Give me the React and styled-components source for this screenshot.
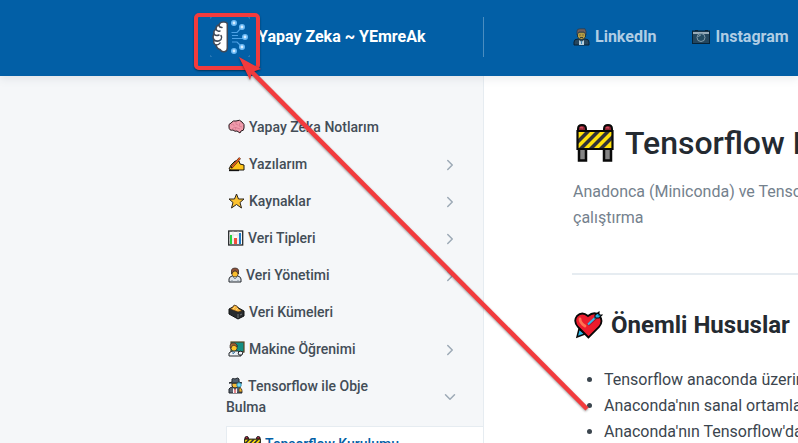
import React from "react";
import styled, { createGlobalStyle } from "styled-components";
import { FiChevronDown, FiChevronRight } from "react-icons/fi";

const GlobalStyle = createGlobalStyle`
  * {
    box-sizing: border-box;
  }
  body {
    margin: 0;
    background-color: #ffffff;
    color: #3b454e;
    font-family: Roboto, sans-serif;
    font-size: 16px;
  }
  a {
    color: inherit;
    text-decoration: none;
  }
  svg {
    flex: none;
  }
`;

const Page = styled.div`
  position: relative;
  display: flex;
  flex-direction: column;
  height: 100vh;
  overflow: hidden;
`;

const Header = styled.header`
  position: relative;
  display: flex;
  align-items: center;
  flex: none;
  height: 76px;
  padding-bottom: 2px;
  background-color: #025fa6;
  box-shadow: 0 3px 8px rgba(116, 129, 141, 0.15);
`;

const Brand = styled.a`
  display: flex;
  align-items: center;
  flex: 0 0 484px;
  gap: 8px;
  height: 40px;
  padding-left: 210px;
  border-right: 1px solid #4a8dc0;
  color: #ffffff;
  font-weight: 700;
  line-height: 24px;
`;

const HeaderNav = styled.nav`
  display: flex;
  gap: 34px;
  padding-left: 89px;
`;

const HeaderLink = styled.a`
  display: flex;
  align-items: center;
  gap: 5px;
  color: #b0cde4;
  font-weight: 700;
  line-height: 24px;
  white-space: nowrap;
`;

const Body = styled.div`
  display: flex;
  flex: 1;
`;

const Sidebar = styled.aside`
  flex: 0 0 484px;
  padding: 33px 0 0 226px;
  background-color: #f5f7f9;
  border-right: 1px solid #e6ecf1;
`;

const Row = styled.a`
  display: flex;
  align-items: center;
  justify-content: space-between;
  padding: 8px 24px 8px 0;
  color: #434d57;
  font-size: 14px;
  font-weight: 500;
  line-height: 21px;
`;

const RowLabel = styled.span`
  max-width: 168px;

  svg {
    margin: 0 4px 0 2px;
    vertical-align: -3px;
  }
`;

const Arrow = styled.span`
  display: flex;
  color: #9daab6;
`;

const SubPages = styled.div`
  border: 1px solid #e6ecf1;
  border-right: none;
  background-color: #ffffff;
`;

const SubLink = styled.a`
  display: flex;
  align-items: center;
  gap: 4px;
  padding: 7px 17px;
  color: #025fa6;
  font-size: 14px;
  font-weight: 500;
  line-height: 21px;
`;

const Main = styled.main`
  flex: 1;
  min-width: 0;
  padding: 46px 0 0 88px;
  white-space: nowrap;
`;

const Title = styled.h1`
  display: flex;
  align-items: center;
  gap: 11px;
  margin: 0;
  padding-left: 4px;
  color: #242a31;
  font-size: 32px;
  font-weight: 500;
  line-height: 42px;
`;

const Lead = styled.p`
  margin: 15px 0 0;
  padding: 0 0 42px 1px;
  border-bottom: 2px solid #e6ecf1;
  color: #74818d;
  line-height: 26px;
`;

const SubTitle = styled.h2`
  display: flex;
  align-items: center;
  gap: 8px;
  margin: 32px 0 0;
  padding-left: 2px;
  color: #242a31;
  font-size: 24px;
  font-weight: 700;
  line-height: 36px;
`;

const Notes = styled.ul`
  margin: 24px 0 0;
  padding-left: 32px;
  line-height: 26px;
`;

const Frame = styled.div`
  position: absolute;
  top: 13px;
  left: 194px;
  width: 66px;
  height: 57px;
  border: 4px solid #f23b3d;
  border-radius: 5px;
  box-shadow: 0 1px 2px rgba(0, 0, 0, 0.5);
`;

const Pointer = styled.svg`
  position: absolute;
  top: 56px;
  left: 236px;
  filter: drop-shadow(0 1px 1px rgba(0, 0, 0, 0.4));
  pointer-events: none;
`;

const Logo = () => (
  <svg width="40" height="40" viewBox="0 0 40 40" aria-hidden="true">
    <path
      d="M0 2V1Q0 0 2 0M38 0Q40 0 40 2M0 38Q0 40 2 40M38 40Q40 40 40 38"
      fill="none"
      stroke="#347fb9"
    />
    <path
      d="M17.3 6.5Q16 4.5 13 5Q10 5 9 8Q6 8.500 6 12Q3 14 4 17Q2 20 4 23Q3 27 6 28Q7 32 10 32.500Q12 35.500 15 34.500Q17.300 34 17.300 31Z"
      fill="#fff"
      stroke="#414a58"
      strokeWidth="1.5"
      strokeLinejoin="round"
    />
    <path
      d="M6 12Q7 15 10 14M9 8Q9 10.500 12 10.500M4 17Q6 19.500 9 18M4 23Q8 25.500 11 22.500Q12.500 20.500 11 18.500M6 28Q9 28 10 26"
      fill="none"
      stroke="#414a58"
      strokeWidth="1.5"
      strokeLinecap="round"
    />
    <path
      d="M21.500 15.500H27L31 11M22 18.500H28M22 21.500H33M22 25H27L31 29"
      fill="none"
      stroke="#4da1e5"
      strokeWidth="1.2"
    />
    <g fill="#d6edff" stroke="#6ab9f5" strokeWidth="1.6">
      <circle cx="24" cy="6" r="2.2" />
      <circle cx="32" cy="10" r="2.2" />
      <circle cx="35" cy="20" r="2.2" />
      <circle cx="32" cy="30" r="2.2" />
      <circle cx="24" cy="34" r="2.2" />
    </g>
  </svg>
);

const Worker = () => (
  <svg width="17" height="18" viewBox="0 0 17 18" aria-hidden="true">
    <path d="M1 17V14Q1 11 5 11H12Q16 11 16 14V17Z" fill="#28475e" stroke="#082337" />
    <path d="M4.500 4V9Q8.500 14 12.500 9V4Z" fill="#b69c43" stroke="#1c3441" />
    <path d="M4 7V3Q4 .8 7 .8H12Q13.500 3 13 7L11 4H6Z" fill="#705f5c" stroke="#24384a" strokeWidth=".7" />
    <path d="M6 12L8.500 14L11 12V17H6Z" fill="#b8cedb" />
    <path d="M8 13H9V16H8Z" fill="#3987b9" />
    <path d="M6.500 7H7.500M9.500 7H10.500M7 9.500H10" stroke="#3c4034" />
  </svg>
);

const Camera = () => (
  <svg width="20" height="18" viewBox="0 0 20 18" aria-hidden="true">
    <rect x="1.500" y="3" width="17" height="12.500" fill="#24475f" stroke="#082337" />
    <path d="M2 4H18V6H2Z" fill="#98aab7" />
    <path d="M4 2.500H7M14 2.500H17" stroke="#082337" />
    <circle cx="10" cy="9.500" r="4" fill="#254c63" stroke="#819bab" />
    <path d="M7.500 9Q8 7 10 7" fill="none" stroke="#aabdca" strokeWidth=".7" />
  </svg>
);

const Brain = () => (
  <svg width="17" height="16" viewBox="0 0 17 16" aria-hidden="true">
    <path
      d="M1 8Q0 5 3 4Q5 1 8 2Q12 0 14 3Q17 5 16 9Q16 12 13 12L12 14L9 12Q7 13 5 11Q1 12 1 8Z"
      fill="#f09bab"
      stroke="#25191d"
    />
    <path
      d="M3 6Q6 4 6 7M8 3Q7 6 10 6M12 4L11 7L14 8M4 10Q7 7 9 9L12 10M7 11L8 8"
      fill="none"
      stroke="#d77790"
      strokeWidth=".8"
    />
  </svg>
);

const Writing = () => (
  <svg width="17" height="16" viewBox="0 0 17 16" aria-hidden="true">
    <path d="M1 13L3 9L7 5H11L12 8L16 9V14H3Z" fill="#ffc51b" stroke="#1b1813" />
    <path d="M1 14.500H11" stroke="#111" strokeWidth="1.3" />
    <path d="M3 12L12 2" stroke="#2f1c15" strokeWidth="2.4" />
    <path d="M4 11L12 2" stroke="#ec6123" strokeWidth="1.4" />
  </svg>
);

const Star = () => (
  <svg width="17" height="16" viewBox="0 0 17 16" aria-hidden="true">
    <path
      d="M8.500 1L10.500 6H16L12 9.500L13.500 15L8.500 11.500L3.500 15L5 9.500L1 6H6.500Z"
      fill="#fcc230"
      stroke="#2b241b"
      strokeLinejoin="round"
    />
  </svg>
);

const Chart = () => (
  <svg width="16" height="16" viewBox="0 0 16 16" aria-hidden="true">
    <rect x=".7" y="1" width="14" height="14" fill="#fafafa" stroke="#25282a" strokeWidth="1.3" />
    <path d="M5 1V14M10 1V14M1 5H14M1 10H14" stroke="#d7d9d9" strokeWidth=".6" />
    <path d="M2 5H4V14H2Z" fill="#28d43f" />
    <path d="M6 8H9V14H6Z" fill="#f34d3c" />
    <path d="M11 3H13V14H11Z" fill="#207bc9" />
  </svg>
);

const Person = () => (
  <svg width="14" height="16" viewBox="0 0 14 16" aria-hidden="true">
    <path d="M1 15V12Q1 10 4 9H10Q13 10 13 12V15Z" fill="#dce2e8" stroke="#25292e" />
    <path d="M4 4V8Q7 12 10 8V4Z" fill="#f9bd2e" stroke="#352c24" strokeWidth=".7" />
    <path d="M3.500 7V3Q4 1 7 1Q10 1 10.500 3V7L8.500 4.500L7 3.500L5 5Z" fill="#8d5037" stroke="#292321" strokeWidth=".7" />
    <path d="M5 10L7 12L9 10M4 13V15M10 13V15" fill="none" stroke="#808d98" />
  </svg>
);

const CardBox = () => (
  <svg width="17" height="16" viewBox="0 0 17 16" aria-hidden="true">
    <path d="M1 5L7 2L16 7V12L10 15L1 10Z" fill="#292c2e" stroke="#101213" />
    <path d="M2 5L5 3L6 1L9 2L10 4L14 7L10 8Z" fill="#f8b340" stroke="#302415" strokeWidth=".7" />
    <path d="M5 5L7 3M8 6L10 4" stroke="#ffdf75" />
    <path d="M10 10V14M12 11L14 10" stroke="#707477" />
  </svg>
);

const Teacher = () => (
  <svg width="17" height="16" viewBox="0 0 17 16" aria-hidden="true">
    <rect x="3" y="1" width="13" height="10" fill="#138f83" stroke="#574421" strokeWidth="1.2" />
    <path d="M1 15V12Q3 10 6 10H10Q13 11 13 15Z" fill="#edf1f5" stroke="#24282c" />
    <path d="M3 4H9V8Q6 12 3 8Z" fill="#ffc52b" stroke="#32291e" strokeWidth=".7" />
    <path d="M2 7V4Q3 1 7 2L9 4V6L6 4L4 5L3 7Z" fill="#a26336" stroke="#30261f" strokeWidth=".6" />
    <path d="M11 14L10 12L12 10L15 11L14 14Z" fill="#edf1f5" stroke="#24282c" />
    <path d="M5 10V13L7 11" fill="none" stroke="#4b83aa" />
  </svg>
);

const Detective = () => (
  <svg width="16" height="17" viewBox="0 0 16 17" aria-hidden="true">
    <path d="M1 16V12Q2 10 5 10H10Q14 11 14 16Z" fill="#5b6672" stroke="#20252b" />
    <path d="M4 6H10V9Q7 13 4 9Z" fill="#f4bc39" stroke="#302a24" />
    <path d="M1 6L4 5V2Q5 1 7 2Q10 0 11 2V5L14 6Z" fill="#53606e" stroke="#20252b" />
    <path d="M5 11L7 13L9 11V16H5Z" fill="#f4f5f7" />
    <path d="M7 12V16" stroke="#d93944" strokeWidth="1.2" />
    <circle cx="11" cy="8" r="2.2" fill="#7ddcf7" stroke="#238aac" />
    <path d="M12 10L14 13V15H11V12Z" fill="#eeb12a" stroke="#302a24" strokeWidth=".7" />
  </svg>
);

const Barrier = ({ size }) => (
  <svg width={size} height={size} viewBox="0 0 38 38" aria-hidden="true">
    <path d="M3 23H10V36.500H3ZM28 23H35V36.500H28Z" fill="#858585" stroke="#090909" strokeWidth="2.5" />
    <path d="M2 8V5Q2 1 6 1Q10 1 10 5V8M28 8V5Q28 1 32 1Q36 1 36 5V8" fill="#8d2534" stroke="#090909" strokeWidth="2" />
    <path d="M4 4Q5 3 7 4M30 4Q31 3 33 4" fill="none" stroke="#d2485b" strokeWidth="1.5" />
    <rect x="1.300" y="7" width="35.400" height="18" fill="#ffe10a" />
    <path
      d="M2 15L9 8H14L2 20ZM3 24L19 8H24L8 24ZM13 24L29 8H34L18 24ZM23 24L36 11V16L28 24Z"
      fill="#303138"
    />
    <path d="M1.500 7H36.500V25H1.500Z" fill="none" stroke="#090909" strokeWidth="2.2" />
  </svg>
);

const Heart = () => (
  <svg width="29" height="28" viewBox="0 0 29 28" aria-hidden="true">
    <path d="M5 18L3 26L11 23Z" fill="#2cb9e8" stroke="#080808" strokeWidth="1.5" />
    <path
      d="M14.500 26.500L4 16Q-1 10 3 5Q8 0 14 5Q20 0 25 4Q30 10 25 16Z"
      fill="#ec1c2d"
      stroke="#080808"
      strokeWidth="1.8"
    />
    <path d="M6 8Q6 12 11 15" fill="none" stroke="#ff7351" strokeWidth="2.8" strokeLinecap="round" />
    <path d="M14 14L24 5" stroke="#9b1430" strokeWidth="3" />
    <path d="M14 13.500L24 4" stroke="#35bbea" strokeWidth="2" />
    <path d="M21 4L25 1V4H28L25 7H21Z" fill="#24afe1" stroke="#080808" strokeWidth="1.1" />
  </svg>
);

const pages = [
  { icon: <Brain />, label: "Yapay Zeka Notlarım" },
  { icon: <Writing />, label: "Yazılarım", arrow: true },
  { icon: <Star />, label: "Kaynaklar", arrow: true },
  { icon: <Chart />, label: "Veri Tipleri", arrow: true },
  { icon: <Person />, label: "Veri Yönetimi", arrow: true },
  { icon: <CardBox />, label: "Veri Kümeleri" },
  { icon: <Teacher />, label: "Makine Öğrenimi", arrow: true },
  { icon: <Detective />, label: "Tensorflow ile Obje Bulma", arrow: true, open: true },
];

export default function App() {
  return (
    <Page>
      <GlobalStyle />
      <Header>
        <Brand href="#">
          <Logo />
          Yapay Zeka ~ YEmreAk
        </Brand>
        <HeaderNav>
          <HeaderLink href="#linkedin">
            <Worker />
            LinkedIn
          </HeaderLink>
          <HeaderLink href="#instagram">
            <Camera />
            Instagram
          </HeaderLink>
        </HeaderNav>
      </Header>
      <Body>
        <Sidebar>
          <nav>
            {pages.map((page) => (
              <Row href="#" key={page.label}>
                <RowLabel>
                  {page.icon}
                  {page.label}
                </RowLabel>
                {page.arrow && (
                  <Arrow>
                    {page.open ? <FiChevronDown size={18} /> : <FiChevronRight size={18} />}
                  </Arrow>
                )}
              </Row>
            ))}
            <SubPages>
              <SubLink href="#kurulum">
                <Barrier size={17} />
                Tensorflow Kurulumu
              </SubLink>
            </SubPages>
          </nav>
        </Sidebar>
        <Main>
          <Title>
            <Barrier size={38} />
            Tensorflow Kurulumu
          </Title>
          <Lead>
            Anadonca (Miniconda) ve Tensorflow
            <br />
            çalıştırma
          </Lead>
          <SubTitle>
            <Heart />
            Önemli Hususlar
          </SubTitle>
          <Notes>
            <li>Tensorflow anaconda üzerinden</li>
            <li>Anaconda'nın sanal ortamları</li>
            <li>Anaconda'nın Tensorflow'dan</li>
          </Notes>
        </Main>
      </Body>
      <Frame />
      <Pointer width="356" height="360" viewBox="0 0 356 360" aria-hidden="true">
        <path d="M14 14L351 353" stroke="#f23b3d" strokeWidth="4.5" />
        <path d="M3 1L25 13L16 16L14 24Z" fill="#f23b3d" />
      </Pointer>
    </Page>
  );
}
